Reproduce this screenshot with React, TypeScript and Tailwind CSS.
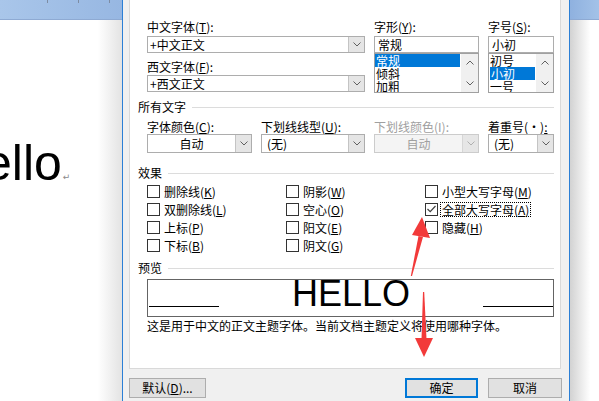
import type { ReactNode } from "react";

const FONT = "font-['Noto_Sans_CJK_SC',sans-serif]";

function U({ children }: { children: ReactNode }) {
  return <span className="underline underline-offset-[1px]">{children}</span>;
}

function ChevronDown({ color = "#606060" }: { color?: string }) {
  return (
    <svg width="8" height="5" viewBox="0 0 8 5">
      <polyline points="0.5,0.5 4,4 7.5,0.5" fill="none" stroke={color} strokeWidth="1" />
    </svg>
  );
}

function ChevronUp() {
  return (
    <svg width="8" height="5" viewBox="0 0 8 5">
      <polyline points="0.5,4.5 4,1 7.5,4.5" fill="none" stroke="#606060" strokeWidth="1" />
    </svg>
  );
}

function Label({ children, className = "" }: { children: ReactNode; className?: string }) {
  return <div className={`h-[14px] whitespace-nowrap leading-[14px] ${className}`}>{children}</div>;
}

function DropInput({ value, className = "" }: { value: string; className?: string }) {
  return (
    <div className={`flex h-[17px] border border-[#adadad] bg-white ${className}`}>
      <span className="flex-1 whitespace-nowrap pl-[2px] leading-[15px]">{value}</span>
      <div className="flex w-[16px] items-center justify-center border-l border-[#c4c4c4] bg-[#e5e5e5]">
        <ChevronDown />
      </div>
    </div>
  );
}

function Combo({
  value,
  center = false,
  disabled = false,
}: {
  value: string;
  center?: boolean;
  disabled?: boolean;
}) {
  return (
    <div
      className={`flex h-[19px] border ${
        disabled ? "border-[#cccccc] bg-[#f4f4f4] text-[#a0a0a0]" : "border-[#adadad] bg-white"
      }`}
    >
      <span className={`flex-1 whitespace-nowrap leading-[17px] ${center ? "text-center" : "pl-[5px]"}`}>{value}</span>
      <div
        className={`flex w-[16px] items-center justify-center border-l ${
          disabled ? "border-[#d6d6d6] bg-[#e6e6e6]" : "border-[#c4c4c4] bg-[#e5e5e5]"
        }`}
      >
        <ChevronDown color={disabled ? "#b0b0b0" : "#606060"} />
      </div>
    </div>
  );
}

function ListBox({ items, sel, selClass }: { items: string[]; sel: number; selClass: string }) {
  return (
    <div className="flex h-[40px] overflow-hidden border border-[#a0a0a0] bg-white">
      <div className="flex-1">
        {items.map((t, i) => (
          <div key={t} className={`h-[13px] whitespace-nowrap leading-[13px] ${i === sel ? `bg-[#0078d7] text-white ${selClass}` : "pl-[1px]"}`}>
            {t}
          </div>
        ))}
      </div>
      <div className="flex w-[17px] flex-col items-center justify-between bg-[#f0f0f0] py-[6px]">
        <ChevronUp />
        <ChevronDown />
      </div>
    </div>
  );
}

function Section({ title, className = "" }: { title: string; className?: string }) {
  return (
    <div className={`-ml-[9px] flex h-[14px] items-center ${className}`}>
      <span className="leading-[14px]">{title}</span>
      <div className="ml-[6px] h-px flex-1 bg-[#dcdcdc]" />
    </div>
  );
}

function Check({ children, checked = false, focus = false }: { children: ReactNode; checked?: boolean; focus?: boolean }) {
  return (
    <div className="flex h-[18px] items-center">
      <div className="flex h-[13px] w-[13px] shrink-0 items-center justify-center border border-[#333333] bg-white">
        {checked && (
          <svg width="9" height="8" viewBox="0 0 9 8">
            <polyline points="0.5,4 3.2,6.6 8.5,1" fill="none" stroke="#404040" strokeWidth="1.2" />
          </svg>
        )}
      </div>
      <span
        className={`ml-[2px] whitespace-nowrap border px-[1px] leading-[13px] ${
          focus ? "border-dotted border-black" : "border-transparent"
        }`}
      >
        {children}
      </span>
    </div>
  );
}

export default function App() {
  return (
    <div className={`relative flex h-[401px] w-[599px] overflow-hidden bg-white text-[12px] text-black ${FONT}`}>
      {/* Word document behind the dialog */}
      <div className="flex w-[122px] flex-col">
        <div className="h-[20px] border-b border-[#8eaad3] bg-gradient-to-r from-[#a9c6ea] to-[#97b7e2]">
          <svg width="122" height="4">
            <line x1="47.5" y1="0" x2="47.5" y2="3" stroke="#7d8ca3" />
            <line x1="78.5" y1="0" x2="78.5" y2="3" stroke="#7d8ca3" />
            <line x1="109.5" y1="0" x2="109.5" y2="3" stroke="#7d8ca3" />
          </svg>
        </div>
        <div className="flex-1 bg-gradient-to-r from-white from-[80%] to-[#e3e3e3] pt-[118px]">
          <div className="flex items-baseline">
            <span className="-ml-[16px] font-['Liberation_Sans',sans-serif] text-[50px] leading-[50px]">ello</span>
            <span className="ml-[1px] font-['DejaVu_Sans',sans-serif] text-[9px] text-[#8a8a8a]">↵</span>
          </div>
        </div>
      </div>
      <div className="w-px bg-[#2b7fd6]" />

      {/* Font dialog */}
      <div className="flex w-[446px] flex-col bg-[#f0f0f0]">
        <div className="ml-[6px] h-[369px] w-[432px] border-x border-b border-[#d9d9d9] bg-white pl-[17px]">
          <div className="flex w-[407px] flex-col">
            <div className="mt-[20px] flex">
              <div className="flex w-[218px] flex-col">
                <Label>
                  中文字体(<U>T</U>):
                </Label>
                <DropInput value="+中文正文" className="mt-[2px]" />
                <Label className="mt-[7px]">
                  西文字体(<U>F</U>):
                </Label>
                <DropInput value="+西文正文" className="mt-[1px]" />
              </div>
              <div className="ml-[9px] flex w-[105px] flex-col">
                <Label>
                  字形(<U>Y</U>):
                </Label>
                <div className="mt-[2px] h-[17px] border border-[#adadad] bg-white pl-[3px] leading-[15px]">常规</div>
                <ListBox items={["常规", "倾斜", "加粗"]} sel={0} selClass="w-[85px] pl-[1px]" />
              </div>
              <div className="ml-[9px] flex w-[66px] flex-col">
                <Label>
                  字号(<U>S</U>):
                </Label>
                <div className="mt-[2px] h-[17px] border border-[#adadad] bg-white pl-[3px] leading-[15px]">小初</div>
                <ListBox items={["初号", "小初", "一号"]} sel={1} selClass="ml-[1px] w-[45px] pl-[1px]" />
              </div>
            </div>

            <Section title="所有文字" className="mt-[7px]" />
            <div className="mt-[6px] flex">
              <div className="flex w-[105px] flex-col">
                <Label>
                  字体颜色(<U>C</U>):
                </Label>
                <Combo value="自动" center />
              </div>
              <div className="ml-[9px] flex w-[104px] flex-col">
                <Label>
                  下划线线型(<U>U</U>):
                </Label>
                <Combo value="(无)" />
              </div>
              <div className="ml-[9px] flex w-[105px] flex-col">
                <Label className="text-[#a0a0a0]">下划线颜色(I):</Label>
                <Combo value="自动" center disabled />
              </div>
              <div className="ml-[9px] flex w-[66px] flex-col">
                <Label>
                  着重号(·)<U>:</U>
                </Label>
                <Combo value="(无)" />
              </div>
            </div>

            <Section title="效果" className="mt-[13px]" />
            <div className="mt-[2px] flex">
              <div className="flex w-[139px] flex-col">
                <Check>
                  删除线(<U>K</U>)
                </Check>
                <Check>
                  双删除线(<U>L</U>)
                </Check>
                <Check>
                  上标(<U>P</U>)
                </Check>
                <Check>
                  下标(<U>B</U>)
                </Check>
              </div>
              <div className="flex w-[139px] flex-col">
                <Check>
                  阴影(<U>W</U>)
                </Check>
                <Check>
                  空心(<U>O</U>)
                </Check>
                <Check>
                  阳文(<U>E</U>)
                </Check>
                <Check>
                  阴文(<U>G</U>)
                </Check>
              </div>
              <div className="flex flex-col">
                <Check>
                  小型大写字母(<U>M</U>)
                </Check>
                <Check checked focus>
                  全部大写字母(<U>A</U>)
                </Check>
                <Check>
                  隐藏(<U>H</U>)
                </Check>
              </div>
            </div>

            <Section title="预览" className="mt-[7px]" />
            <div className="mt-[4px] flex h-[38px] overflow-hidden border border-[#646464] bg-white">
              <div className="ml-px mt-[26px] h-px w-[70px] bg-black" />
              <div className="-mt-[4px] flex-1 text-center font-['Liberation_Sans',sans-serif] text-[36px] leading-[36px]">
                HELLO
              </div>
              <div className="mt-[26px] h-px w-[70px] bg-black" />
            </div>
            <div className="mt-[2px] h-[14px] whitespace-nowrap leading-[14px]">
              这是用于中文的正文主题字体。当前文档主题定义将使用哪种字体。
            </div>
          </div>
        </div>

        <div className="mt-[9px] flex pl-[6px] pr-[7px]">
          <button className="h-[20px] w-[77px] border border-[#adadad] bg-[#e1e1e1] leading-[18px]">
            默认(<U>D</U>)...
          </button>
          <div className="flex-1" />
          <button className="h-[20px] w-[73px] border-2 border-[#0078d7] bg-[#e1e1e1] leading-[16px]">确定</button>
          <button className="ml-[10px] h-[20px] w-[74px] border border-[#adadad] bg-[#e1e1e1] leading-[18px]">取消</button>
        </div>
      </div>
      <div className="w-px bg-[#2b7fd6]" />

      {/* document to the right */}
      <div className="flex flex-1 flex-col">
        <div className="h-[20px] border-b border-[#8eaad3] bg-gradient-to-r from-[#8fb1df] to-[#a3c2e8]" />
        <div className="flex-1 bg-gradient-to-r from-[#d2d2d2] to-white to-[70%]" />
      </div>

      {/* red annotation arrows */}
      <svg className="pointer-events-none absolute inset-0" width="599" height="401">
        <polygon points="422,217 430,238 412,235" fill="#f23a3a" />
        <polygon points="418.5,236 423,237 412,276 410.8,276" fill="#f23a3a" />
        <polygon points="424,357 433,338 415,338" fill="#f23a3a" />
        <polygon points="423,292 424.2,292 426.5,339 421.5,339" fill="#f23a3a" />
      </svg>
    </div>
  );
}
